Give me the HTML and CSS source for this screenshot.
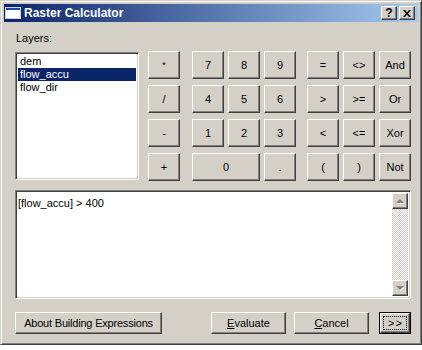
FILE: index.html
```html
<!DOCTYPE html>
<html lang="en">
<head>
  <meta charset="UTF-8" />
  <title>Raster Calculator</title>
  <link rel="stylesheet" href="styles.css">
</head>
<body>
  <div class="window">
    <div class="titlebar">
      <svg class="app-icon" width="16" height="12" viewBox="0 0 16 12">
        <rect x="0.5" y="0.5" width="15" height="11" fill="#fff" stroke="#c8d4e8"/>
        <rect x="1" y="1" width="14" height="2" fill="#1c48a8"/>
      </svg>
      <span class="title">Raster Calculator</span>
      <div class="caption-buttons">
        <div class="cap-btn raised help">?</div>
        <div class="cap-btn raised">
          <svg width="8" height="7" viewBox="0 0 8 7">
            <path d="M0 0h2l2 2.5 2-2.5h2L5 3.5 8 7H6L4 4.5 2 7H0l3-3.5z" fill="#000"/>
          </svg>
        </div>
      </div>
    </div>

    <div class="content">
      <div class="top-row">
        <div class="layers">
          <div class="label">Layers:</div>
          <div class="listbox sunken">
            <div class="item">dem</div>
            <div class="item selected">flow_accu</div>
            <div class="item">flow_dir</div>
          </div>
        </div>

        <div class="keypad">
          <div class="keys ops">
            <div class="key raised small">*</div>
            <div class="key raised">/</div>
            <div class="key raised">-</div>
            <div class="key raised">+</div>
          </div>
          <div class="keys nums">
            <div class="key raised">7</div>
            <div class="key raised">8</div>
            <div class="key raised">9</div>
            <div class="key raised">4</div>
            <div class="key raised">5</div>
            <div class="key raised">6</div>
            <div class="key raised">1</div>
            <div class="key raised">2</div>
            <div class="key raised">3</div>
            <div class="key raised zero">0</div>
            <div class="key raised">.</div>
          </div>
          <div class="keys logic">
            <div class="key raised">=</div>
            <div class="key raised">&lt;&gt;</div>
            <div class="key raised">And</div>
            <div class="key raised">&gt;</div>
            <div class="key raised">&gt;=</div>
            <div class="key raised">Or</div>
            <div class="key raised">&lt;</div>
            <div class="key raised">&lt;=</div>
            <div class="key raised">Xor</div>
            <div class="key raised">(</div>
            <div class="key raised">)</div>
            <div class="key raised">Not</div>
          </div>
        </div>
      </div>

      <div class="expression sunken">
        <div class="expr-text">[flow_accu] &gt; 400</div>
        <div class="scrollbar">
          <div class="arrow raised"><span class="tri up"></span></div>
          <div class="track"></div>
          <div class="arrow raised"><span class="tri down"></span></div>
        </div>
      </div>

      <div class="actions">
        <div class="btn raised about">About Building Expressions</div>
        <div class="spacer"></div>
        <div class="btn raised wide"><u>E</u>valuate</div>
        <div class="btn raised wide"><u>C</u>ancel</div>
        <div class="btn default">
          <div class="default-inner raised"><span class="focus">&gt;&gt;</span></div>
        </div>
      </div>
    </div>
  </div>
</body>
</html>
```

FILE: styles.css
```css
body {
  margin: 0;
  background: #ffffff;
  font-family: "Liberation Sans", Arial, sans-serif;
  font-size: 11px;
  color: #000;
}

.window {
  width: 422px;
  height: 345px;
  box-sizing: border-box;
  background: #d4d0c8;
  border: 1px solid;
  border-color: #d4d0c8 #404040 #404040 #d4d0c8;
  box-shadow: inset 1px 1px #fff, inset -1px -1px #808080;
  padding: 3px;
}

.raised {
  background: #d4d0c8;
  border: 1px solid;
  border-color: #fff #404040 #404040 #fff;
  box-shadow: inset -1px -1px #808080;
  box-sizing: border-box;
}

.sunken {
  background: #fff;
  border: 1px solid;
  border-color: #808080 #fff #fff #808080;
  box-shadow: inset 1px 1px #404040, inset -1px -1px #d4d0c8;
  box-sizing: border-box;
}

/* title bar */
.titlebar {
  height: 18px;
  display: flex;
  align-items: center;
  background: linear-gradient(to right, #0a246a, #a6caf0);
  padding: 0 3px 0 1px;
}

.app-icon {
  margin-right: 3px;
}

.title {
  color: #fff;
  font-weight: bold;
  font-size: 12px;
}

.caption-buttons {
  margin-left: auto;
  display: flex;
  gap: 2px;
}

.cap-btn {
  width: 16px;
  height: 14px;
  display: flex;
  justify-content: center;
  align-items: center;
  font-weight: bold;
  font-size: 12px;
  line-height: 1;
}

/* body */
.content {
  padding: 9px 7px 0 11px;
}

.top-row {
  display: flex;
}

.layers {
  width: 124px;
}

.label {
  line-height: 14px;
  height: 14px;
  margin-bottom: 7px;
  padding-left: 1px;
}

.listbox {
  height: 128px;
  padding: 2px;
}

.item {
  height: 13px;
  line-height: 13px;
  padding-left: 2px;
}

.item.selected {
  background: #0a246a;
  color: #fff;
}

.keypad {
  display: flex;
  margin-left: 9px;
  margin-top: 20px;
}

.keys {
  display: grid;
  grid-auto-rows: 28px;
  row-gap: 6px;
  column-gap: 4px;
}

.ops {
  grid-template-columns: 32px;
}

.nums {
  grid-template-columns: repeat(3, 32px);
  margin-left: 12px;
}

.logic {
  grid-template-columns: repeat(3, 32px);
  margin-left: 11px;
}

.key {
  display: flex;
  justify-content: center;
  align-items: center;
}

.key.small {
  font-size: 9px;
}

.key.zero {
  grid-column: span 2;
}

/* expression box */
.expression {
  margin-top: 9px;
  height: 109px;
  display: flex;
  padding: 2px;
}

.expr-text {
  flex: 1;
  line-height: 14px;
  padding-top: 3px;
}

.scrollbar {
  width: 16px;
  display: flex;
  flex-direction: column;
}

.arrow {
  height: 16px;
  display: flex;
  justify-content: center;
  align-items: center;
}

.track {
  flex: 1;
  background-color: #d4d0c8;
  background-image: conic-gradient(#fff 25%, #d4d0c8 0 50%, #fff 0 75%, #d4d0c8 0);
  background-size: 2px 2px;
}

.tri {
  width: 0;
  height: 0;
  border-left: 4px solid transparent;
  border-right: 4px solid transparent;
  filter: drop-shadow(1px 1px 0 #fff);
}

.tri.up {
  border-bottom: 4px solid #808080;
}

.tri.down {
  border-top: 4px solid #808080;
}

/* bottom buttons */
.actions {
  margin-top: 13px;
  display: flex;
  height: 22px;
}

.btn {
  height: 22px;
  display: flex;
  justify-content: center;
  align-items: center;
}

.about {
  width: 147px;
  letter-spacing: -0.2px;
}

.spacer {
  flex: 1;
}

.wide {
  width: 75px;
  margin-right: 8px;
}

.wide + .wide {
  margin-right: 10px;
}

.default {
  width: 32px;
  border: 1px solid #000;
  box-sizing: border-box;
}

.default-inner {
  width: 100%;
  height: 100%;
  display: flex;
  justify-content: center;
  align-items: center;
}

.focus {
  width: 24px;
  height: 14px;
  border: 1px dotted #000;
  box-sizing: border-box;
  display: flex;
  justify-content: center;
  align-items: center;
  letter-spacing: 1px;
  padding-left: 1px;
}
```
